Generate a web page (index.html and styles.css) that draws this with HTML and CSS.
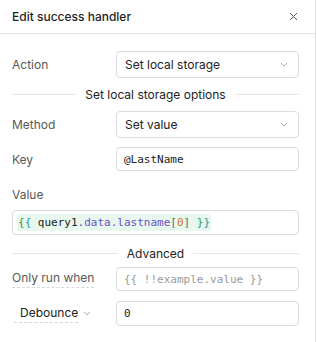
FILE: index.html
```html
<!DOCTYPE html>
<html lang="en">
<head>
    <meta charset="UTF-8">
    <meta name="viewport" content="width=device-width, initial-scale=1">
    <title>Edit success handler</title>
    <link rel="stylesheet" href="styles.css">
</head>

<body>
    <div class="panel">
        <div class="header">
            <span class="title">Edit success handler</span>
            <svg class="close" width="9" height="9" viewBox="0 0 9 9">
                <path d="M1 1 L8 8 M8 1 L1 8" stroke="#555" stroke-width="1" fill="none"/>
            </svg>
        </div>

        <div class="content">
            <div class="row row-action">
                <span class="label">Action</span>
                <div class="field select">
                    <span>Set local storage</span>
                    <svg class="chevron" width="8" height="5" viewBox="0 0 8 5"><path d="M1 1 L4 4 L7 1" stroke="#b0b0b0" stroke-width="1" fill="none"/></svg>
                </div>
            </div>

            <div class="divider divider-options">Set local storage options</div>

            <div class="row row-method">
                <span class="label">Method</span>
                <div class="field select">
                    <span>Set value</span>
                    <svg class="chevron" width="8" height="5" viewBox="0 0 8 5"><path d="M1 1 L4 4 L7 1" stroke="#b0b0b0" stroke-width="1" fill="none"/></svg>
                </div>
            </div>

            <div class="row row-key">
                <span class="label">Key</span>
                <div class="field input mono">@LastName</div>
            </div>

            <div class="label value-label">Value</div>
            <div class="code-box mono">
                <span class="hl"><span class="br1">{</span><span class="br2">{</span> query1<span class="prop">.data.lastname</span><span class="idx">[</span><span class="num">0</span><span class="idx">]</span> <span class="br1">}</span><span class="br2">}</span></span>
            </div>

            <div class="divider divider-adv">Advanced</div>

            <div class="row row-run">
                <span class="label dotted">Only run when</span>
                <div class="field input mono placeholder">{{ !!example.value }}</div>
            </div>

            <div class="row row-debounce">
                <span class="debounce">
                    <span class="dotted">Debounce</span>
                    <svg width="8" height="5" viewBox="0 0 8 5"><path d="M1 1 L4 4 L7 1" stroke="#b0b0b0" stroke-width="1" fill="none"/></svg>
                </span>
                <div class="field input mono">0</div>
            </div>
        </div>
    </div>
</body>
</html>
```

FILE: styles.css
```css
body {
    margin: 0;
    padding: 0;
    background: #fff;
    font-family: Inter, "Noto Sans", sans-serif;
    font-size: 12px;
    color: #222;
}

.panel {
    width: 315px;
    height: 342px;
    border-right: 1px solid #e2e2e2;
}

.header {
    height: 34px;
    border-bottom: 1px solid #e2e2e2;
    display: flex;
    align-items: center;
    justify-content: space-between;
    padding: 0 17px 0 12px;
    box-sizing: border-box;
}

.title {
    font-size: 12px;
    font-weight: 500;
    color: #1f1f1f;
}

.content {
    padding: 17px 16px 0 12px;
    display: flex;
    flex-direction: column;
}

.row {
    display: grid;
    grid-template-columns: 104px 1fr;
    align-items: center;
}

.label {
    color: #585858;
}

.field {
    border: 1px solid #dcdcdc;
    border-radius: 4px;
    box-sizing: border-box;
    display: flex;
    align-items: center;
}

.select {
    height: 27px;
    padding: 0 10px 0 8px;
    justify-content: space-between;
    color: #222;
}

.input {
    height: 24px;
    padding: 0 7px;
}

.mono {
    font-family: "DejaVu Sans Mono", "Liberation Mono", monospace;
    font-size: 11px;
    color: #222;
}

.placeholder {
    color: #9a9a9a;
}

.divider {
    display: flex;
    align-items: center;
    gap: 9px;
    height: 20px;
    color: #222;
}

.divider::before,
.divider::after {
    content: "";
    flex: 1;
    border-top: 1px solid #e6e6e6;
}

.divider-options {
    margin-top: 6px;
}

.row-method {
    margin-top: 7px;
}

.row-key {
    margin-top: 9px;
}

.value-label {
    margin-top: 16px;
    line-height: 16px;
}

.code-box {
    margin-top: 7px;
    height: 25px;
    border: 1px solid #dcdcdc;
    border-radius: 4px;
    box-sizing: border-box;
    display: flex;
    align-items: center;
    padding: 0 4px;
}

.hl {
    background: #e8f8ef;
    padding: 2px 1px;
    border-radius: 2px;
}

.br1 { color: #2e9d4f; }
.br2 { color: #1b9a9a; }
.prop { color: #6a4fc9; }
.idx { color: #666; }
.num { color: #c9741a; }

.divider-adv {
    margin-top: 8px;
}

.row-run {
    margin-top: 4px;
}

.row-debounce {
    margin-top: 10px;
}

.row-debounce .input {
    height: 25px;
}

.dotted {
    border-bottom: 1px dashed #d6d6d6;
    justify-self: start;
    padding-bottom: 2px;
}

.debounce {
    display: flex;
    align-items: center;
    gap: 5px;
    padding-left: 8px;
    color: #222;
}

.debounce .dotted {
    margin-left: -6px;
    padding-left: 6px;
}
```
